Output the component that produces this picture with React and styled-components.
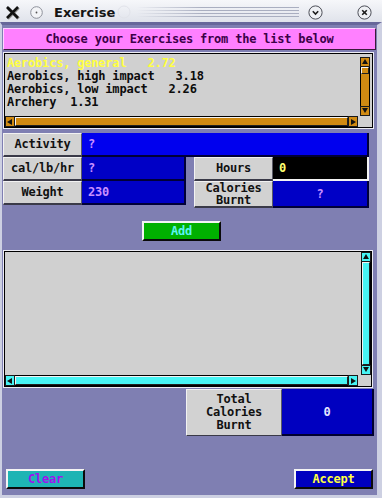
import React from 'react';
import styled, { createGlobalStyle } from 'styled-components';

const GlobalStyle = createGlobalStyle`
  html, body { margin: 0; padding: 0; background: #7f7fb2; }
  * { box-sizing: border-box; }
`;

const mono = `"DejaVu Sans Mono", "Liberation Mono", monospace`;

const Window = styled.div`
  width: 382px;
  height: 498px;
  display: flex;
  flex-direction: column;
  background: #7f7fb2;
  overflow: hidden;
`;

const TitleBar = styled.div`
  height: 22px;
  display: flex;
  align-items: center;
  padding: 2px 10px 0 5px;
  background: linear-gradient(#f6f7fa, #e0e3eb);
`;

const TitleText = styled.span`
  margin-left: 11px;
  font-family: "DejaVu Sans", "Liberation Sans", sans-serif;
  font-weight: bold;
  font-size: 13px;
  color: #151515;
`;

const Grooves = styled.div`
  flex: 1;
  height: 10px;
  margin: 0 0 0 6px;
  background: repeating-linear-gradient(to bottom, #a9aec0 0 1px, transparent 1px 3px);
  -webkit-mask-image: linear-gradient(to right, transparent, #000 40%);
  mask-image: linear-gradient(to right, transparent, #000 40%);
`;

const Frame = styled.div`
  flex: 1;
  display: flex;
  flex-direction: column;
  padding: 3px 1px 0 1px;
  border-top: 3px solid #67679a;
  border-left: 2px solid #cdd0e2;
  border-right: 5px solid #cdd0e2;
  border-bottom: 3px solid #cdd0e2;
  background: #7f7fb2;
  font-family: ${mono};
  font-weight: bold;
  font-size: 12px;
  letter-spacing: -0.2px;
`;

const Header = styled.div`
  height: 22px;
  display: flex;
  align-items: center;
  justify-content: center;
  background: #ff80ff;
  border-top: 1px solid #ffd4ff;
  border-left: 1px solid #ffd4ff;
  border-bottom: 1px solid #3a1a3a;
  border-right: 1px solid #3a1a3a;
  color: #3c0048;
`;

const ListBox = styled.div`
  display: grid;
  grid-template-columns: 1fr 10px;
  grid-template-rows: 1fr 11px;
  column-gap: ${p => p.$gap}px;
  width: ${p => p.$w}px;
  height: ${p => p.$h}px;
  margin-top: ${p => p.$mt}px;
  padding: ${p => p.$pad};
  background: #d0d0d0;
  border: 1px solid #ececf4;
  box-shadow: inset 1px 1px 0 #000, inset -1px -1px 0 #000;
`;

const Items = styled.div`
  padding-left: 2px;
  line-height: 13px;
  white-space: pre;
  overflow: hidden;
`;

const Item = styled.div`
  color: ${p => (p.$sel ? '#ffff40' : '#0c0c0c')};
`;

const Bar = styled.div`
  display: flex;
  flex-direction: ${p => (p.$v ? 'column' : 'row')};
  grid-row: ${p => (p.$v ? p.$span : '2')};
  grid-column: ${p => (p.$v ? '2' : '1')};
  background: ${p => p.$color};
`;

const Arrow = styled.div`
  flex: 0 0 10px;
  display: flex;
  align-items: center;
  justify-content: center;
  background: ${p => p.$color};
  border: 1px solid #1a1a1a;
`;

const Track = styled.div`
  flex: 1;
  display: flex;
  flex-direction: ${p => (p.$v ? 'column' : 'row')};
  border-left: ${p => (p.$v ? '1px solid #000' : '0')};
  border-right: ${p => (p.$v ? '1px solid #000' : '0')};
  border-top: ${p => (p.$v ? '0' : '1px solid #000')};
  border-bottom: ${p => (p.$v ? '0' : '1px solid #000')};
`;

const Thumb = styled.div`
  flex: ${p => (p.$full ? '1' : `0 0 ${p.$size}px`)};
  background: ${p => p.$color};
  border-top: 1px solid #f4f4f4;
  border-left: 1px solid #f4f4f4;
  border-bottom: 1px solid #202020;
  border-right: 1px solid #202020;
`;

const Form = styled.div`
  display: grid;
  grid-template-columns: 79px 104px 8px 79px 96px;
  grid-template-rows: 24px 24px 27px;
  margin-top: 4px;
`;

const Label = styled.div`
  grid-column: ${p => p.$col};
  grid-row: ${p => p.$row};
  height: ${p => p.$h || 24}px;
  display: flex;
  align-items: center;
  justify-content: center;
  text-align: center;
  line-height: 12.5px;
  background: #d2d2d2;
  color: #111;
  border-top: 1px solid #f2f2f2;
  border-left: 1px solid #f2f2f2;
  border-bottom: 2px solid #3a3a48;
  border-right: 1px solid #5a5a66;
`;

const Value = styled.div`
  grid-column: ${p => p.$col};
  grid-row: ${p => p.$row};
  height: ${p => p.$h || 24}px;
  display: flex;
  align-items: center;
  justify-content: ${p => (p.$center ? 'center' : 'flex-start')};
  padding-left: ${p => (p.$center ? 0 : 6)}px;
  background: ${p => p.$bg};
  color: ${p => p.$fg};
  border-bottom: 2px solid ${p => p.$edge || '#000038'};
  border-right: 2px solid ${p => p.$edge || '#000038'};
`;

const Button = styled.div`
  width: 79px;
  height: 20px;
  margin-left: ${p => p.$ml || 0}px;
  margin-top: ${p => p.$mt || 0}px;
  display: flex;
  align-items: center;
  justify-content: center;
  background: ${p => p.$bg};
  color: ${p => p.$fg};
  border-top: 2px solid #f4f4f4;
  border-left: 2px solid #f4f4f4;
  border-bottom: 2px solid #0a0a0a;
  border-right: 2px solid #0a0a0a;
`;

const TotalRow = styled.div`
  display: flex;
  height: 47px;
  margin: 1px 0 0 183px;
`;

const TotalLabel = styled(Label)`
  width: 96px;
  height: 47px;
  line-height: 13px;
  border-bottom: 1px solid #3a3a48;
`;

const TotalValue = styled(Value)`
  width: 92px;
  height: 47px;
`;

const ButtonRow = styled.div`
  display: flex;
  justify-content: space-between;
  padding: 0 3px;
  margin-top: 33px;
`;

const Tri = ({ dir }) => {
  const pts = {
    up: '4,1 7,6 1,6',
    down: '1,1 7,1 4,6',
    left: '1,4 6,1 6,7',
    right: '2,1 7,4 2,7',
  }[dir];
  return (
    <svg width="8" height="8" viewBox="0 0 8 8">
      <polygon points={pts} fill="#111" />
    </svg>
  );
};

const Scroll = ({ v, color, full, size, span }) => (
  <Bar $v={v} $color={color} $span={span}>
    <Arrow $color={color}><Tri dir={v ? 'up' : 'left'} /></Arrow>
    <Track $v={v}>
      <Thumb $color={color} $full={full} $size={size} />
    </Track>
    <Arrow $color={color}><Tri dir={v ? 'down' : 'right'} /></Arrow>
  </Bar>
);

const CloseX = () => (
  <svg width="15" height="15" viewBox="0 0 15 15">
    <path d="M2 2 L13 13 M13 2 L2 13" stroke="#9a9a9a" strokeWidth="3.4" transform="translate(0.6 0.6)" />
    <path d="M2 2 L13 13 M13 2 L2 13" stroke="#111" strokeWidth="2.6" />
  </svg>
);

const Dot = () => (
  <svg width="13" height="13" viewBox="0 0 13 13" style={{ marginLeft: 10 }}>
    <circle cx="6.5" cy="6.5" r="5.8" fill="#f3f4f7" stroke="#8d909a" />
    <circle cx="6.5" cy="6.5" r="0.9" fill="#555" />
  </svg>
);

const Faint = () => (
  <svg width="14" height="14" viewBox="0 0 14 14" style={{ marginLeft: 2 }}>
    <circle cx="7" cy="7" r="6" fill="none" stroke="#e1e3ea" />
  </svg>
);

const RoundBtn = ({ kind, ml }) => (
  <svg width="15" height="15" viewBox="0 0 15 15" style={{ marginLeft: ml }}>
    <circle cx="7.5" cy="7.5" r="6.6" fill="#eef0f4" stroke="#4d4f58" />
    {kind === 'down' ? (
      <path d="M4.8 6.3 L7.5 9 L10.2 6.3" fill="none" stroke="#1c1c1c" strokeWidth="1.6" />
    ) : (
      <path d="M5.2 5.2 L9.8 9.8 M9.8 5.2 L5.2 9.8" fill="none" stroke="#1c1c1c" strokeWidth="1.6" />
    )}
  </svg>
);

const exercises = [
  'Aerobics, general   2.72',
  'Aerobics, high impact   3.18',
  'Aerobics, low impact   2.26',
  'Archery  1.31',
];

export default function App() {
  return (
    <Window>
      <GlobalStyle />
      <TitleBar>
        <CloseX />
        <Dot />
        <TitleText>Exercise</TitleText>
        <Faint />
        <Grooves />
        <RoundBtn kind="down" ml={9} />
        <RoundBtn kind="close" ml={34} />
      </TitleBar>
      <Frame>
        <Header>Choose your Exercises from the list below</Header>

        <ListBox $w={371} $h={77} $mt={2} $gap={2} $pad="4px 3px 1px 1px">
          <Items>
            {exercises.map((e, i) => (
              <Item key={e} $sel={i === 0}>{e}</Item>
            ))}
          </Items>
          <Scroll v color="#d08a12" size={7} span="1" />
          <Scroll color="#d08a12" full />
        </ListBox>

        <Form>
          <Label $col="1" $row="1">Activity</Label>
          <Value $col="2 / 6" $row="1" $bg="#0000ee" $fg="#c890ff">?</Value>
          <Label $col="1" $row="2">cal/lb/hr</Label>
          <Value $col="2" $row="2" $bg="#0000c6" $fg="#c890ff">?</Value>
          <Label $col="4" $row="2">Hours</Label>
          <Value $col="5" $row="2" $bg="#000" $fg="#ffff70" $edge="#f4f4f4">0</Value>
          <Label $col="1" $row="3">Weight</Label>
          <Value $col="2" $row="3" $bg="#0000c6" $fg="#c890ff">230</Value>
          <Label $col="4" $row="3" $h={27}>Calories<br />Burnt</Label>
          <Value $col="5" $row="3" $h={27} $bg="#0000c6" $fg="#c890ff" $center>?</Value>
        </Form>

        <Button $ml={139} $mt={13} $bg="#00b000" $fg="#5cf4f4">Add</Button>

        <ListBox $w={370} $h={138} $mt={9} $gap={3} $pad="1px 1px 1px 1px">
          <Items />
          <Scroll v color="#48f4f4" full span="1" />
          <Scroll color="#48f4f4" full />
        </ListBox>

        <TotalRow>
          <TotalLabel>Total<br />Calories<br />Burnt</TotalLabel>
          <TotalValue $bg="#0000c0" $fg="#e4e4ff" $center $edge="#000030">0</TotalValue>
        </TotalRow>

        <ButtonRow>
          <Button $bg="#1eb4b4" $fg="#a010f0">Clear</Button>
          <Button $bg="#0000c0" $fg="#ffff40">Accept</Button>
        </ButtonRow>
      </Frame>
    </Window>
  );
}
